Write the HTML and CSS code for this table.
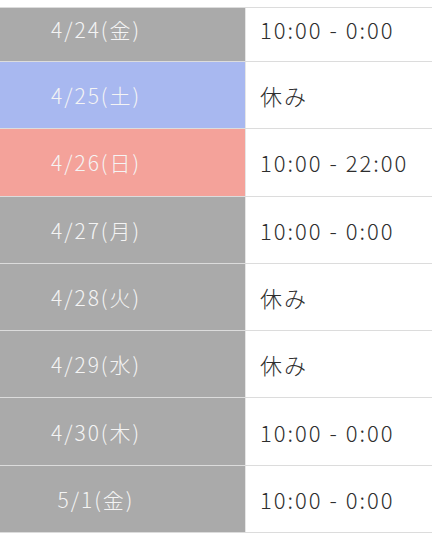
FILE: index.html
```
<!DOCTYPE html>
<html lang="ja">
<head>
<meta charset="utf-8">
<link rel="stylesheet" href="styles.css">
</head>
<body>
<div class="table">
  <div class="row first"><div class="day">4/24(金)</div><div class="hours">10:00 - 0:00</div></div>
  <div class="row sat"><div class="day">4/25(土)</div><div class="hours">休み</div></div>
  <div class="row sun"><div class="day">4/26(日)</div><div class="hours">10:00 - 22:00</div></div>
  <div class="row"><div class="day">4/27(月)</div><div class="hours">10:00 - 0:00</div></div>
  <div class="row"><div class="day">4/28(火)</div><div class="hours">休み</div></div>
  <div class="row"><div class="day">4/29(水)</div><div class="hours">休み</div></div>
  <div class="row"><div class="day">4/30(木)</div><div class="hours">10:00 - 0:00</div></div>
  <div class="row"><div class="day">5/1(金)</div><div class="hours">10:00 - 0:00</div></div>
</div>
</body>
</html>
```
FILE: styles.css
```
html, body {
  margin: 0;
  padding: 0;
  background: #ffffff;
}
body {
  font-family: "Noto Sans CJK JP", "Noto Sans", sans-serif;
  font-weight: 300;
  padding-top: 7px;
}
.table {
  border-top: 1px solid #dcdcdc;
  display: flex;
  flex-direction: column;
}
.row {
  display: flex;
  height: 66.3px;
  border-bottom: 1px solid #dcdcdc;
}
.row.first {
  height: 53px;
}
.day {
  width: 246px;
  box-sizing: border-box;
  padding-right: 53px;
  background: #aaaaaa;
  color: #f4f4f4;
  font-size: 21px;
  letter-spacing: 2px;
  display: flex;
  align-items: center;
  justify-content: center;
  border-right: 1px solid #e6e6e6;
}
.sat .day { background: #a8b8f0; }
.sun .day { background: #f4a29a; }
.hours {
  flex: 1;
  padding-left: 14px;
  color: #2e2e2e;
  font-size: 22px;
  letter-spacing: 2px;
  display: flex;
  align-items: center;
}
.first .day, .first .hours {
  padding-bottom: 11px;
}
```
